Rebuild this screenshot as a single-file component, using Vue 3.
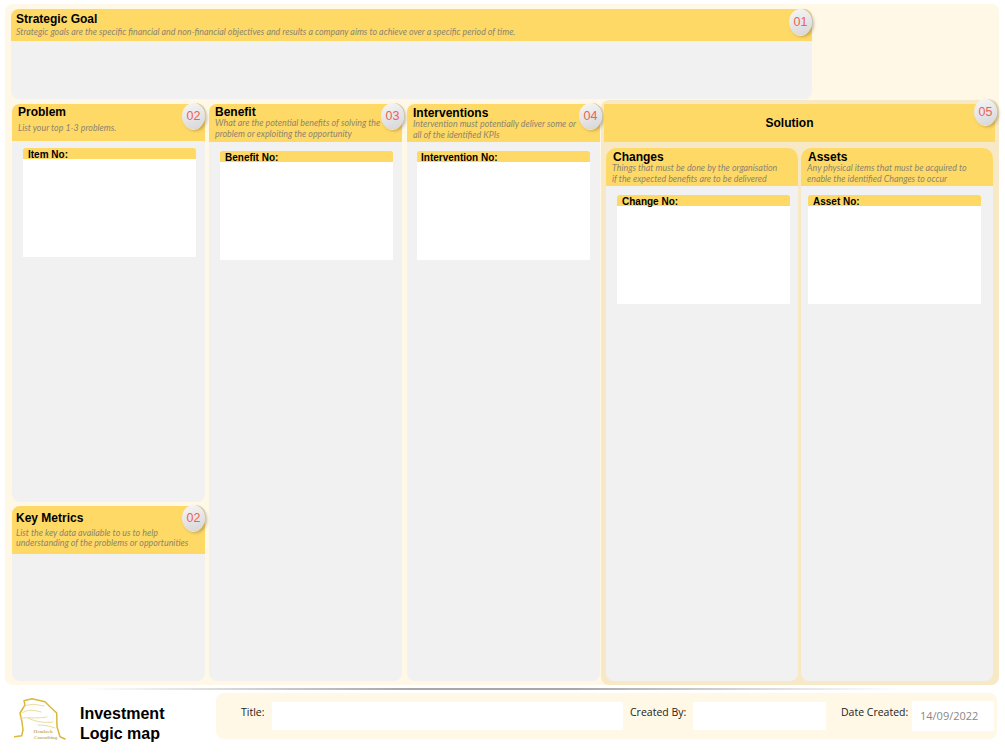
<script setup>
const goal = {
  title: 'Strategic Goal',
  sub: 'Strategic goals are the specific financial and non-financial objectives and results a company aims to achieve over a specific period of time.',
}
const midColumns = [
  {
    key: 'benefit',
    title: 'Benefit',
    lines: ['What are the potential benefits of solving the', 'problem or exploiting the opportunity'],
    badge: '03',
    label: 'Benefit No:',
  },
  {
    key: 'interventions',
    title: 'Interventions',
    lines: ['Intervention must potentially deliver some or', 'all of the identified KPIs'],
    badge: '04',
    label: 'Intervention No:',
  },
]
const solutionColumns = [
  {
    key: 'changes',
    title: 'Changes',
    lines: ['Things that must be done by the organisation', 'if the expected benefits are to be delivered'],
    label: 'Change No:',
  },
  {
    key: 'assets',
    title: 'Assets',
    lines: ['Any physical items that must be acquired to', 'enable the identified Changes to occur'],
    label: 'Asset No:',
  },
]
</script>

<template>
  <div class="page">
    <main class="board">
      <section class="goal card">
        <header class="head goal-head">
          <h2>{{ goal.title }}</h2>
          <p>{{ goal.sub }}</p>
          <span class="badge badge-goal">01</span>
        </header>
      </section>

      <div class="columns">
        <div class="stack">
          <section class="card problem">
            <header class="head problem-head">
              <h2>Problem</h2>
              <p>List your top 1-3 problems.</p>
              <span class="badge badge-left">02</span>
            </header>
            <div class="item item-problem">
              <div class="item-label">Item No:</div>
            </div>
          </section>
          <section class="card metrics">
            <header class="head metrics-head">
              <h2>Key Metrics</h2>
              <p>List the key data available to us to help<br />understanding of the problems or opportunities</p>
              <span class="badge badge-left">02</span>
            </header>
          </section>
        </div>

        <section v-for="col in midColumns" :key="col.key" class="card mid" :class="col.key">
          <header class="head mid-head">
            <h2>{{ col.title }}</h2>
            <p>{{ col.lines[0] }}<br />{{ col.lines[1] }}</p>
            <span class="badge badge-mid">{{ col.badge }}</span>
          </header>
          <div class="item item-mid">
            <div class="item-label">{{ col.label }}</div>
          </div>
        </section>

        <section class="solution">
          <header class="solution-head">
            <h2>Solution</h2>
            <span class="badge badge-solution">05</span>
          </header>
          <div class="solution-cols">
            <section v-for="col in solutionColumns" :key="col.key" class="card sol-card" :class="col.key">
              <header class="head sol-head">
                <h2>{{ col.title }}</h2>
                <p>{{ col.lines[0] }}<br />{{ col.lines[1] }}</p>
              </header>
              <div class="item item-sol">
                <div class="item-label">{{ col.label }}</div>
              </div>
            </section>
          </div>
        </section>
      </div>
    </main>

    <div class="rule"></div>

    <footer class="footer">
      <div class="logo">
        <svg width="56" height="44" viewBox="0 0 56 44" fill="none" stroke-linecap="round" stroke-linejoin="round">
          <path d="M0.500 38.700 L7.700 37.700 L9 32 L8 24 L6 15 L11 7 L10 2.700 L18 0.800 L31 3.700 L36 8.700 L42.700 15 L43 28.700 L46 38.700 L51 41" stroke="#d9b83a" stroke-width="1.500"/>
          <path d="M8 15 C14 11 20 12 27 14 M11 8 C18 5 24 7 30 8 M6 20 C14 19 24 21 33 19 M14 20 C22 24 30 25 39 24 M24 27 C30 27 36 28 41 30" stroke="#ecdc9c" stroke-width="1"/>
          <text x="19.500" y="34.500" class="logo-text">Hemlock</text>
          <text x="20" y="41" class="logo-text">Consulting</text>
        </svg>
      </div>
      <h1 class="doc-title">Investment<br />Logic map</h1>
      <div class="meta">
        <span class="meta-label label-title">Title:</span>
        <div class="field field-title"></div>
        <span class="meta-label label-by">Created By:</span>
        <div class="field field-by"></div>
        <span class="meta-label label-date">Date Created:</span>
        <div class="field field-date">14/09/2022</div>
      </div>
    </footer>
  </div>
</template>

<style>
html, body { margin: 0; background: #fff; }
</style>

<style scoped>
.page {
  width: 1005px;
  height: 754px;
  box-sizing: border-box;
  padding-top: 4px;
  overflow: hidden;
  font-family: "Liberation Sans", Arial, sans-serif;
  color: #000;
}
.board {
  width: 994px;
  height: 681px;
  margin-left: 5px;
  box-sizing: border-box;
  background: #fff8e7;
  border-radius: 8px;
  padding: 5px 0 0 6px;
  display: flex;
  flex-direction: column;
  gap: 5px;
}
.card {
  background: #f1f1f1;
  border-radius: 8px;
  position: relative;
  box-sizing: border-box;
}
.head {
  background: #ffd966;
  border-radius: 8px 8px 0 0;
  position: relative;
  box-sizing: border-box;
}
h2 {
  margin: 0;
  font-size: 12px;
  line-height: 11px;
  font-weight: 700;
  color: #000;
}
p {
  margin: 0;
  font-family: Lato, sans-serif;
  font-style: italic;
  font-size: 8.850px;
  line-height: 10.700px;
  color: #8a8570;
  white-space: nowrap;
}
.goal {
  width: 801px;
  height: 90px;
}
.goal-head {
  height: 32px;
  padding: 4.500px 0 0 5px;
}
.goal-head p { margin-top: 2px; }
.columns {
  display: flex;
  height: 581px;
}
.stack {
  width: 193px;
  margin-left: 1px;
  margin-right: 4px;
  display: flex;
  flex-direction: column;
  gap: 4px;
}
.problem { height: 398px; }
.problem-head {
  height: 37px;
  padding: 3px 0 0 6px;
}
.problem-head p { margin-top: 4.600px; }
.metrics { height: 175px; }
.metrics-head {
  height: 48px;
  padding: 6.500px 0 0 4px;
}
.metrics-head p { margin-top: 4px; }
.mid {
  width: 193px;
  height: 577px;
  margin-right: 5px;
}
.mid-head {
  height: 38px;
  padding: 3px 0 0 6px;
}
.interventions .mid-head { padding-top: 4px; }
.item {
  background: #fff;
  position: relative;
  width: 173px;
}
.item-label {
  background: #ffd966;
  height: 11px;
  border-radius: 2px 2px 0 0;
  font-size: 10px;
  line-height: 13px;
  font-weight: 700;
  padding-left: 5px;
  color: #000;
}
.item-problem {
  margin: 7px 0 0 11px;
  height: 109px;
}
.item-mid {
  margin: 9px 0 0 11px;
  height: 109px;
}
.interventions .item-mid { margin-left: 10px; }
.interventions .item-label { padding-left: 4px; }
.solution {
  width: 398px;
  height: 585px;
  margin-top: -4px;
  margin-left: -4px;
  background: #f7e9c6;
  border-radius: 8px;
  box-sizing: border-box;
  padding: 4px 4px 4px 3px;
  display: flex;
  flex-direction: column;
}
.solution-head {
  height: 38px;
  background: #ffd966;
  position: relative;
  display: flex;
  align-items: center;
  justify-content: center;
  padding-right: 20px;
}
.solution-cols {
  display: flex;
  gap: 3px;
  margin-top: 6px;
  padding-left: 2px;
}
.sol-card {
  width: 192px;
  height: 533px;
  border-radius: 12px 12px 8px 8px;
}
.sol-head {
  height: 38px;
  border-radius: 10px 10px 0 0;
  padding: 4px 0 0 7px;
}
.sol-head p { margin-left: -1px; }
.item-sol {
  margin: 9px 0 0 11px;
  height: 109px;
}
.assets .item-sol { margin-left: 7px; }
.badge {
  position: absolute;
  right: -2px;
  top: -1px;
  width: 23px;
  height: 26px;
  border-radius: 50%;
  background: linear-gradient(160deg, #f7f7f7 0%, #e3e3e5 60%, #d6d6d8 100%);
  box-shadow: 2px -1px 0 -1px #cfc8ae, 0 2px 0 -1px #f4e9c0, 2px 2px 3px rgba(90, 80, 50, .35);
  color: #ee6055;
  font-size: 12.500px;
  line-height: 26px;
  text-align: center;
  font-family: "Liberation Sans", sans-serif;
}
.badge-left { right: 0; }
.badge-mid { right: -2px; }
.badge-goal { right: 0; top: 0; }
.badge-solution { right: -2px; top: -5px; }

.rule {
  width: 820px;
  height: 2px;
  margin: 3px 0 0 80px;
  background: linear-gradient(90deg, #fff 0%, #a8a8a8 40%, #a8a8a8 60%, #fff 100%);
}
.footer {
  height: 66px;
  display: flex;
  align-items: flex-start;
}
.logo {
  width: 75px;
  padding: 8px 0 0 14px;
  box-sizing: border-box;
}
.logo-text {
  font-family: "Liberation Serif", serif;
  font-size: 5px;
  font-weight: 700;
  fill: #c9b570;
  stroke: none;
}
.doc-title {
  margin: 14px 0 0 5px;
  width: 136px;
  font-size: 16px;
  line-height: 20px;
  font-weight: 700;
}
.meta {
  width: 781px;
  height: 46px;
  margin-top: 3px;
  background: #fff8e7;
  border-radius: 8px;
  flex: none;
  display: flex;
  align-items: flex-start;
}
.meta-label {
  font-family: "Open Sans", sans-serif;
  font-size: 10.500px;
  line-height: 14px;
  color: #222;
  margin-top: 12px;
  white-space: nowrap;
}
.field { background: #fff; height: 28px; margin-top: 9px; box-sizing: border-box; }
.label-title { margin-left: 25px; width: 31px; }
.field-title { width: 351px; }
.label-by { margin-left: 7px; width: 63px; }
.field-by { width: 133px; }
.label-date { margin-left: 15px; width: 71px; }
.field-date {
  width: 82px;
  height: 30px;
  margin-top: 8px;
  font-family: "Open Sans", sans-serif;
  font-size: 11px;
  line-height: 30px;
  color: #888;
  padding-left: 8px;
}
</style>
